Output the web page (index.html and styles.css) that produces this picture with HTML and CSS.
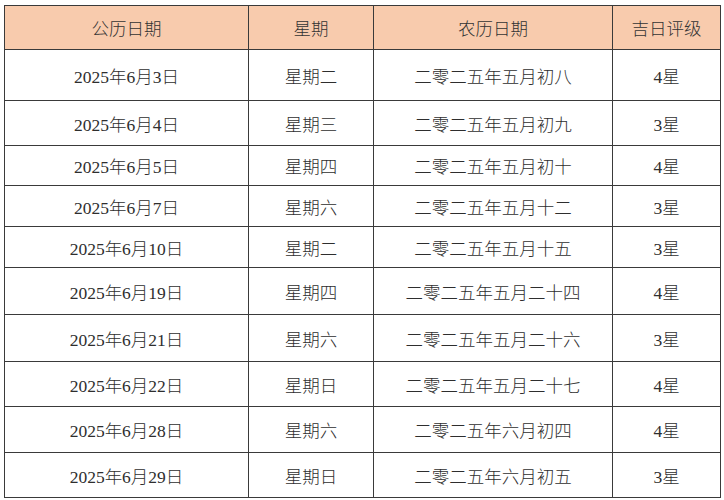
FILE: index.html
```html
<!DOCTYPE html>
<html lang="zh-CN">
<head>
<meta charset="utf-8">
<title>吉日表</title>
<link rel="stylesheet" href="styles.css">
</head>
<body>
<div class="table">
  <div class="cell head">公历日期</div><div class="cell head">星期</div><div class="cell head">农历日期</div><div class="cell head">吉日评级</div>
  <div class="cell">2025年6月3日</div><div class="cell">星期二</div><div class="cell">二零二五年五月初八</div><div class="cell">4星</div>
  <div class="cell">2025年6月4日</div><div class="cell">星期三</div><div class="cell">二零二五年五月初九</div><div class="cell">3星</div>
  <div class="cell">2025年6月5日</div><div class="cell">星期四</div><div class="cell">二零二五年五月初十</div><div class="cell">4星</div>
  <div class="cell">2025年6月7日</div><div class="cell">星期六</div><div class="cell">二零二五年五月十二</div><div class="cell">3星</div>
  <div class="cell">2025年6月10日</div><div class="cell">星期二</div><div class="cell">二零二五年五月十五</div><div class="cell">3星</div>
  <div class="cell">2025年6月19日</div><div class="cell">星期四</div><div class="cell">二零二五年五月二十四</div><div class="cell">4星</div>
  <div class="cell">2025年6月21日</div><div class="cell">星期六</div><div class="cell">二零二五年五月二十六</div><div class="cell">3星</div>
  <div class="cell">2025年6月22日</div><div class="cell">星期日</div><div class="cell">二零二五年五月二十七</div><div class="cell">4星</div>
  <div class="cell">2025年6月28日</div><div class="cell">星期六</div><div class="cell">二零二五年六月初四</div><div class="cell">4星</div>
  <div class="cell">2025年6月29日</div><div class="cell">星期日</div><div class="cell">二零二五年六月初五</div><div class="cell">3星</div>
</div>
</body>
</html>
```
FILE: styles.css
```css
html, body {
  margin: 0;
  background: #ffffff;
}
body {
  padding: 5px 0 0 4px;
  font-family: "Liberation Serif", "Noto Sans CJK SC", serif;
  font-size: 17.5px;
  font-weight: 300;
  color: #2e2e2e;
}
.table {
  display: grid;
  grid-template-columns: 244px 125px 239px 108px;
  grid-template-rows: 44px 51px 45px 40px 41px 41px 47px 47px 45px 46px 45px;
  width: max-content;
  border-left: 1px solid #3a3a3a;
  border-top: 1px solid #3a3a3a;
}
.cell {
  box-sizing: border-box;
  border-right: 1px solid #3a3a3a;
  border-bottom: 1px solid #3a3a3a;
  display: flex;
  align-items: center;
  justify-content: center;
  white-space: nowrap;
}
.head {
  background: #f8cbad;
  color: #333333;
}
```
